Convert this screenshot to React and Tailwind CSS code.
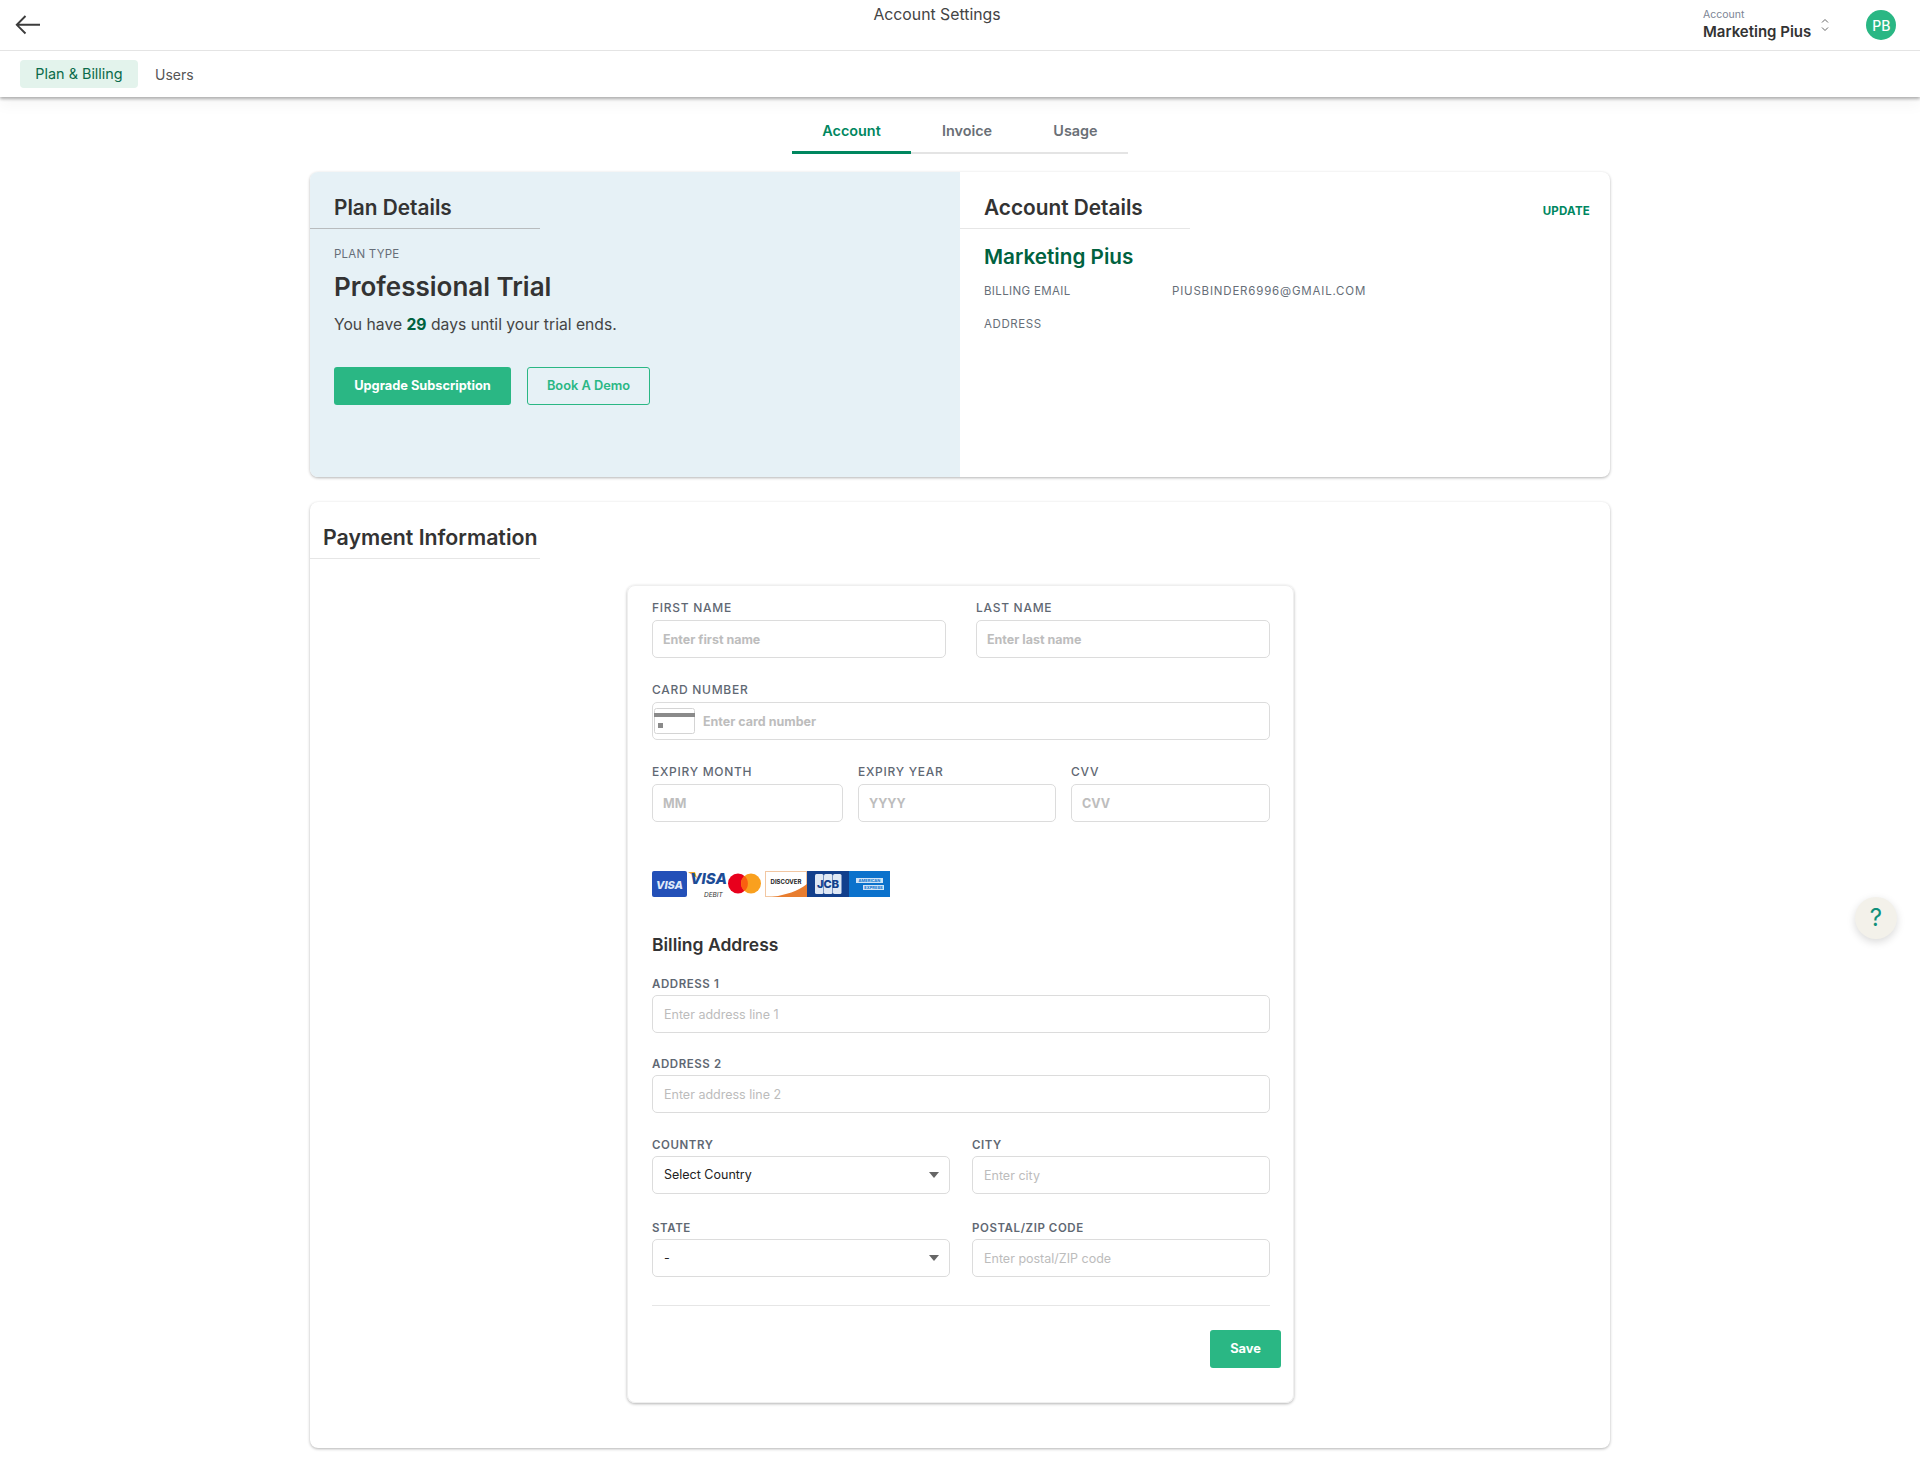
import React from 'react'

const INPUT = 'block w-full h-[38px] rounded-[5px] border border-[#dcdcdc] bg-white outline-none'
const BOLD_INPUT = `${INPUT} px-[10px] text-[12.5px] font-bold placeholder:text-[#bdbdbd]`
const LIGHT_INPUT = `${INPUT} px-[11px] text-[12.5px] placeholder:text-[#bcbcbc]`
const LABEL = 'block text-[12px] leading-4 font-medium tracking-[0.06em] text-[#5f6873]'
const ADDRESS_LABEL = 'block text-[11.5px] leading-4 font-semibold tracking-[0.05em] text-[#5f6873]'

function Field({ label, placeholder, className = '' }) {
  return (
    <div className={className}>
      <label className={`${LABEL} mb-[4px]`}>{label}</label>
      <input className={BOLD_INPUT} placeholder={placeholder} />
    </div>
  )
}

function AddressField({ label, placeholder, className = '' }) {
  return (
    <div className={className}>
      <label className={`${ADDRESS_LABEL} mb-[3px]`}>{label}</label>
      <input className={LIGHT_INPUT} placeholder={placeholder} />
    </div>
  )
}

function SelectField({ label, value, className = '' }) {
  return (
    <div className={className}>
      <label className={`${ADDRESS_LABEL} mb-[3px]`}>{label}</label>
      <div className="relative">
        <select className={`${INPUT} appearance-none px-[11px] text-[12.5px] text-[#222]`} defaultValue={value}>
          <option>{value}</option>
        </select>
        <svg className="absolute right-[11px] top-[16px]" width="10" height="6" viewBox="0 0 10 6">
          <path d="M0 0h10L5 6z" fill="#666" />
        </svg>
      </div>
    </div>
  )
}

function CardLogos() {
  return (
    <svg className="block mt-[49px]" width="240" height="30" viewBox="0 0 240 30">
      {/* visa */}
      <rect x="0" y="0" width="35" height="26" rx="2" fill="#2350b8" />
      <text x="17.5" y="17.5" textAnchor="middle" fontSize="11" fontWeight="800" fontStyle="italic" fill="#dfe8f8" fontFamily="Inter, sans-serif">VISA</text>
      {/* visa debit */}
      <path d="M36 1h7l2 6z" fill="#f0a92e" />
      <text x="38" y="13" fontSize="15" fontWeight="800" fontStyle="italic" fill="#1c4c96" fontFamily="Inter, sans-serif">VISA</text>
      <text x="52" y="26" fontSize="6.5" fontStyle="italic" fill="#333" fontFamily="Inter, sans-serif">DEBIT</text>
      {/* mastercard */}
      <circle cx="86" cy="12.5" r="10" fill="#e8001c" />
      <circle cx="99" cy="12.5" r="10" fill="#f9a01e" />
      <path d="M92.5 5a10 10 0 0 1 0 15a10 10 0 0 1 0-15z" fill="#fa5f10" />
      {/* discover */}
      <rect x="113.5" y="0.5" width="41" height="25" fill="#fff" stroke="#f2c7a2" />
      <path d="M155 13v13h-35c14-2 26-6 35-13z" fill="#e87d2f" />
      <text x="134" y="13" textAnchor="middle" fontSize="6" fontWeight="700" fill="#222" fontFamily="Inter, sans-serif">DISCOVER</text>
      {/* jcb */}
      <rect x="155" y="0" width="42" height="26" fill="#123f8c" />
      <rect x="163" y="3" width="8.5" height="20" rx="1.5" fill="#dfe8f5" />
      <rect x="172" y="3" width="8.5" height="20" rx="1.5" fill="#dfe8f5" />
      <rect x="181" y="3" width="8.5" height="20" rx="1.5" fill="#dfe8f5" />
      <text x="176" y="17" textAnchor="middle" fontSize="11" fontWeight="800" fill="#123f8c" fontFamily="Inter, sans-serif">JCB</text>
      {/* amex */}
      <rect x="197" y="0" width="41" height="26" fill="#0b72cc" />
      <rect x="204" y="7" width="27" height="5" fill="#cfe4f7" />
      <rect x="211" y="14" width="21" height="5" fill="#cfe4f7" />
      <text x="217.5" y="11.2" textAnchor="middle" fontSize="4" fontWeight="700" fill="#0b72cc" fontFamily="Inter, sans-serif">AMERICAN</text>
      <text x="221.5" y="18.2" textAnchor="middle" fontSize="4" fontWeight="700" fill="#0b72cc" fontFamily="Inter, sans-serif">EXPRESS</text>
    </svg>
  )
}

export default function App() {
  return (
    <div className="relative min-h-[1468px] bg-white font-[Inter,sans-serif] text-[#333]">

      {/* Top bars */}
      <header className="bg-white shadow-[0_2px_3px_rgba(0,0,0,0.3),0_8px_14px_rgba(0,0,0,0.04)]">
        <div className="flex h-[51px] border-b border-[#e4e4e4]">
          <div className="w-[172px] pl-[15px] pt-[15px]">
            <svg width="25" height="20" viewBox="0 0 25 20" fill="none" stroke="#3c3c3c" strokeWidth="1.9">
              <path d="M10.5 1 1.8 9.8l8.7 8.7M2 9.8h23" />
            </svg>
          </div>
          <h1 className="flex-1 pt-[4px] text-center text-[15.8px] leading-[22px] text-[#444]">Account Settings</h1>
          <div className="flex w-[218px] items-start">
            <div className="pl-[1px] pt-[8px]">
              <p className="text-[10.5px] leading-[14px] text-[#7b8494]">Account</p>
              <p className="text-[15px] leading-[19px] font-semibold text-[#333]">Marketing Pius</p>
            </div>
            <svg className="ml-[9px] mt-[18px]" width="10" height="14" viewBox="0 0 10 14" fill="none" stroke="#666" strokeWidth="1">
              <path d="M2 4.5 5 1.5l3 3M2 9.5l3 3 3-3" />
            </svg>
            <div className="ml-[36px] mt-[10px] flex h-[30px] w-[30px] items-center justify-center rounded-full bg-[#2ab784] text-[14px] font-medium text-white">PB</div>
          </div>
        </div>
        <nav className="flex h-[46px] items-start pl-5 pt-[9px] text-[14.4px]">
          <a className="flex h-[28px] w-[118px] items-center justify-center rounded-[4px] bg-[#e3f3ec] text-[#0b6b4a]">Plan &amp; Billing</a>
          <a className="ml-[17px] flex h-[28px] items-center text-[14px] text-[#555]">Users</a>
        </nav>
      </header>

      {/* Tabs */}
      <div className="mt-[17px] flex justify-center">
        <div className="flex h-[40px] border-b-2 border-[#e4e4e4] text-[14.4px] font-semibold text-[#6a6f76]">
          <a className="-mb-[2px] flex w-[119px] items-center justify-center border-b-[3px] border-[#00875f] pb-[3px] text-[#00875f]">Account</a>
          <a className="flex w-[112px] items-center justify-center pb-[4px]">Invoice</a>
          <a className="flex w-[105px] items-center justify-center pb-[4px]">Usage</a>
        </div>
      </div>

      <main className="mx-auto mt-[18px] w-[1300px]">

        {/* Plan + account */}
        <section className="flex h-[305px] overflow-hidden rounded-[8px] bg-white shadow-[0_1px_3px_rgba(0,0,0,0.3)]">
          <div className="w-[650px] bg-[#e6f1f6]">
            <div className="h-[57px] w-[230px] border-b border-[#b8bcbe] pl-6 pt-[22px] text-[20.8px] leading-[28px] font-semibold text-[#333]">Plan Details</div>
            <div className="pl-6">
              <p className="mt-[17px] text-[11.5px] leading-4 tracking-[0.02em] text-[#666e78]">PLAN TYPE</p>
              <h2 className="mt-[8px] text-[26px] leading-[34px] font-semibold text-[#333]">Professional Trial</h2>
              <p className="mt-[9px] text-[15.7px] leading-6 text-[#444]">You have <b className="font-bold text-[#00623f]">29</b> days until your trial ends.</p>
              <div className="mt-[30px] flex gap-4">
                <button className="h-[38px] w-[177px] rounded-[3px] bg-[#2ab784] text-[12.8px] font-bold text-white">Upgrade Subscription</button>
                <button className="h-[38px] w-[123px] rounded-[3px] border border-[#2ab784] text-[12.8px] font-semibold text-[#2ab784]">Book A Demo</button>
              </div>
            </div>
          </div>
          <div className="flex-1">
            <div className="flex">
              <div className="h-[57px] w-[230px] border-b border-[#e6e6e6] pl-6 pt-[22px] text-[20.8px] leading-[28px] font-semibold text-[#333]">Account Details</div>
              <a className="ml-auto mr-5 pt-[31px] text-[11.5px] leading-4 font-bold tracking-[0.02em] text-[#00875f]">UPDATE</a>
            </div>
            <div className="pl-6">
              <h2 className="mt-[14px] text-[20.7px] leading-[28px] font-semibold text-[#00623f]">Marketing Pius</h2>
              <div className="mt-3 flex text-[11.5px] leading-4 text-[#666e78]">
                <span className="w-[188px] tracking-[0.03em]">BILLING EMAIL</span>
                <span className="tracking-[0.07em]">PIUSBINDER6996@GMAIL.COM</span>
              </div>
              <p className="mt-[17px] text-[11.5px] leading-4 tracking-[0.05em] text-[#666e78]">ADDRESS</p>
            </div>
          </div>
        </section>

        {/* Payment */}
        <section className="mt-[25px] h-[946px] rounded-[8px] bg-white shadow-[0_1px_3px_rgba(0,0,0,0.3)]">
          <div className="h-[57px] w-[230px] border-b border-[#e6e6e6] pl-[13px] pt-[21px] text-[21.3px] leading-[28px] font-semibold whitespace-nowrap text-[#333]">Payment Information</div>

          <div className="ml-[317px] mt-[26px] h-[818px] w-[667px] rounded-[8px] border border-[#efefef] pl-[24px] pr-[23px] pt-[14px] shadow-[0_1px_3px_rgba(0,0,0,0.3)]">
            <div className="grid grid-cols-2 gap-[30px]">
              <Field label="FIRST NAME" placeholder="Enter first name" />
              <Field label="LAST NAME" placeholder="Enter last name" />
            </div>

            <div className="mt-[24px]">
              <label className={`${LABEL} mb-[4px]`}>CARD NUMBER</label>
              <div className="flex h-[38px] items-center rounded-[5px] border border-[#dcdcdc] pl-[1px]">
                <svg className="shrink-0" width="41" height="26" viewBox="0 0 41 26">
                  <rect x="0.5" y="0.5" width="40" height="25" rx="2" fill="#fff" stroke="#d4d4d4" />
                  <rect x="0" y="5" width="41" height="4" fill="#8a8a8a" />
                  <rect x="4" y="15" width="5" height="5" fill="#8a8a8a" />
                </svg>
                <input className="ml-2 h-full flex-1 bg-transparent text-[12.5px] font-bold outline-none placeholder:text-[#bdbdbd]" placeholder="Enter card number" />
              </div>
            </div>

            <div className="mt-[24px] flex gap-[15px]">
              <Field className="w-[191px]" label="EXPIRY MONTH" placeholder="MM" />
              <Field className="w-[198px]" label="EXPIRY YEAR" placeholder="YYYY" />
              <Field className="flex-1" label="CVV" placeholder="CVV" />
            </div>

            <CardLogos />

            <h3 className="mt-[32px] text-[17.5px] leading-6 font-semibold text-[#333]">Billing Address</h3>

            <AddressField className="mt-[19px]" label="ADDRESS 1" placeholder="Enter address line 1" />
            <AddressField className="mt-[23px]" label="ADDRESS 2" placeholder="Enter address line 2" />

            <div className="mt-[24px] grid grid-cols-[298px_298px] gap-x-[22px]">
              <SelectField label="COUNTRY" value="Select Country" />
              <AddressField label="CITY" placeholder="Enter city" />
              <SelectField className="mt-[26px]" label="STATE" value="-" />
              <AddressField className="mt-[26px]" label="POSTAL/ZIP CODE" placeholder="Enter postal/ZIP code" />
            </div>

            <div className="mt-[28px] border-t border-[#e6e6e6]" />

            <div className="mt-[24px] -mr-[11px] flex justify-end">
              <button className="h-[38px] w-[71px] rounded-[3px] bg-[#2ab784] text-[12.8px] font-bold text-white">Save</button>
            </div>
          </div>
        </section>
      </main>

      {/* Help */}
      <button className="absolute left-[1855px] top-[897px] flex h-[42px] w-[42px] items-center justify-center rounded-full bg-[#f3f1ea] text-[24px] text-[#0f8f7a] shadow-[0_3px_8px_rgba(0,0,0,0.15)]">?</button>
    </div>
  )
}
